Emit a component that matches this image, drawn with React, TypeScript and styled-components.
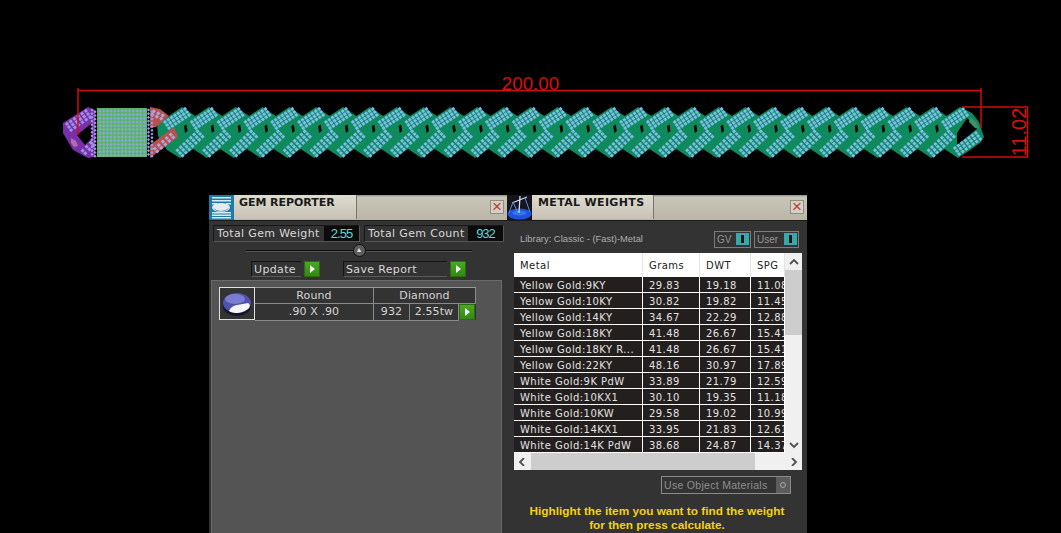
import React from 'react';
import styled, { createGlobalStyle } from 'styled-components';

const GlobalStyle = createGlobalStyle`
  html, body {
    margin: 0;
    padding: 0;
    width: 100%;
    height: 533px;
    overflow: hidden;
    background: #000;
  }
`;

const Page = styled.div`
  width: 1061px;
  height: 533px;
  overflow: hidden;
  background: #000;
`;

const Drawing = styled.svg`
  display: block;
  width: 1061px;
  height: 195px;
`;

const Panels = styled.div`
  display: flex;
  margin-left: 209px;
  height: 338px;
`;

const Panel = styled.section<{ $w: number }>`
  width: ${(p) => p.$w}px;
  flex: none;
  display: flex;
  flex-direction: column;
  background: #333;
  font-family: 'DejaVu Sans', sans-serif;
`;

const TitleBar = styled.header`
  height: 26px;
  flex: none;
  display: flex;
  align-items: flex-start;
  background: linear-gradient(#8a8a80 0, #c9c6b8 2px, #b9b6a8 100%);
  border-bottom: 1px solid #1c1c1c;
  box-sizing: border-box;
`;

const TitleIcon = styled.svg`
  width: 25px;
  height: 25px;
  flex: none;
  display: block;
`;

const TitleTab = styled.div<{ $w: number; $ls: number; $pad: number }>`
  width: ${(p) => p.$w}px;
  height: 24px;
  flex: none;
  box-sizing: border-box;
  padding: 1px 0 0 ${(p) => p.$pad}px;
  background: linear-gradient(#dedbd0, #c6c3b5);
  border-right: 1px solid #77756b;
  font-weight: 700;
  font-size: 11px;
  letter-spacing: ${(p) => p.$ls}px;
  line-height: 13px;
  color: #1a1a1a;
  white-space: nowrap;
`;

const TitleFill = styled.div`
  flex: 1;
`;

const CloseBox = styled.div`
  width: 14px;
  height: 14px;
  margin: 5px 3px 0 0;
  box-sizing: border-box;
  border: 1px solid #8f8d84;
  background: #d4d0c6;
  color: #b84030;
  font: 400 17px/11px 'Liberation Sans', sans-serif;
  text-align: center;
`;

const FieldRow = styled.div`
  display: flex;
  gap: 4px;
  margin: 4px 0 0 4px;
`;

const Field = styled.div<{ $w: number }>`
  width: ${(p) => p.$w}px;
  height: 17px;
  box-sizing: border-box;
  display: flex;
  border: 1px solid #161616;
  border-right-color: #555;
  border-bottom-color: #555;
  background: #333;
`;

const FieldLabel = styled.div`
  flex: 1;
  padding-left: 3px;
  font-size: 11px;
  line-height: 15px;
  letter-spacing: 0.35px;
  color: #d8d8d8;
  white-space: nowrap;
`;

const FieldValue = styled.div<{ $w: number }>`
  width: ${(p) => p.$w}px;
  background: #0b0b0b;
  color: #63d6d6;
  font: 400 13px/15px 'Liberation Sans', sans-serif;
  text-align: center;
  letter-spacing: -1px;
`;

const SliderRow = styled.div`
  display: flex;
  align-items: center;
  margin: 1px 0 0 37px;
  width: 226px;
  height: 15px;
`;

const SliderLine = styled.div`
  flex: 1;
  height: 1px;
  background: #0c0c0c;
  box-shadow: 0 1px 0 #555;
`;

const SliderKnob = styled.div`
  width: 13px;
  height: 13px;
  flex: none;
  box-sizing: border-box;
  border-radius: 50%;
  border: 1px solid #111;
  background: #5e5e5e;
  color: #e6e6e6;
  font: 400 8px/10px 'DejaVu Sans', sans-serif;
  text-align: center;
`;

const ActionRow = styled.div`
  display: flex;
  align-items: center;
  margin: 2px 0 0 42px;
  height: 17px;
`;

const ActionLabel = styled.div<{ $w: number }>`
  width: ${(p) => p.$w}px;
  height: 16px;
  flex: none;
  box-sizing: border-box;
  padding-left: 2px;
  border-left: 1px solid #141414;
  border-top: 1px solid #141414;
  border-bottom: 1px solid #5a5a5a;
  margin-right: 3px;
  font-size: 11px;
  line-height: 15px;
  letter-spacing: 0.35px;
  color: #d8d8d8;
  white-space: nowrap;
`;

const GoButton = styled.div<{ $gap?: number }>`
  width: 16px;
  height: 16px;
  flex: none;
  display: flex;
  align-items: center;
  justify-content: center;
  margin-right: ${(p) => p.$gap ?? 0}px;
  box-sizing: border-box;
  border: 1px solid #2c6b12;
  background: linear-gradient(#4aa822, #2f8a12);
  &::after {
    content: '';
    border-left: 5px solid #f2f2f2;
    border-top: 4px solid transparent;
    border-bottom: 4px solid transparent;
    margin-left: 1px;
  }
`;

const ListBox = styled.div`
  flex: 1;
  margin: 3px 5px 0 2px;
  padding: 6px 0 0 7px;
  background: #545454;
  border: 1px solid #6a6a6a;
  border-bottom: none;
`;

const GemRow = styled.div`
  display: flex;
  width: 257px;
`;

const GemSwatch = styled.div`
  width: 36px;
  height: 33px;
  flex: none;
  box-sizing: border-box;
  border: 1px solid #e0e0e0;
  background: #333;
`;

const GemGrid = styled.div`
  flex: 1;
  display: grid;
  grid-template-columns: 119px 36px 49px 17px;
  grid-template-rows: 16px 17px;
  background: #333;
  border-top: 1px solid #999;
  box-sizing: border-box;
  height: 33px;
`;

const GemCell = styled.div<{ $span?: number }>`
  grid-column: span ${(p) => p.$span ?? 1};
  box-sizing: border-box;
  border-right: 1px solid #8a8a8a;
  border-bottom: 1px solid #8a8a8a;
  font-size: 11px;
  line-height: 15px;
  letter-spacing: 0.1px;
  color: #d4d4d4;
  text-align: center;
  white-space: nowrap;
`;

const LibraryRow = styled.div`
  display: flex;
  align-items: center;
  height: 18px;
  margin: 9px 8px 0 13px;
`;

const LibraryText = styled.div`
  flex: 1;
  font: 400 9.4px/18px 'Liberation Sans', sans-serif;
  color: #aeaeae;
`;

const ToggleBox = styled.div<{ $w: number }>`
  width: ${(p) => p.$w}px;
  height: 17px;
  box-sizing: border-box;
  margin-left: 3px;
  display: flex;
  align-items: center;
  justify-content: space-between;
  padding: 0 1px 0 2px;
  border: 1px solid #7c7c7c;
  font: 400 10px/15px 'Liberation Sans', sans-serif;
  color: #949494;
`;

const ToggleSwitch = styled.div`
  width: 13px;
  height: 12px;
  background: #38a8b0;
  display: flex;
  justify-content: center;
  &::after {
    content: '';
    width: 3px;
    background: #101010;
    margin: 2px 0;
  }
`;

const TableFrame = styled.div`
  width: 288px;
  height: 217px;
  flex: none;
  margin: 5px 0 0 7px;
  background: #f2f2f2;
  display: flex;
  flex-direction: column;
`;

const TableMain = styled.div`
  display: flex;
  height: 200px;
  flex: none;
`;

const TableBody = styled.div`
  width: 271px;
  flex: none;
  overflow: hidden;
  background: #fff;
`;

const Row = styled.div<{ $head?: boolean }>`
  display: flex;
  height: ${(p) => (p.$head ? 24 : 16)}px;
  box-sizing: border-box;
  border-bottom: ${(p) => (p.$head ? 'none' : '1px solid #fff')};
`;

const Cell = styled.div<{ $w: number; $head?: boolean }>`
  width: ${(p) => p.$w}px;
  flex: none;
  box-sizing: border-box;
  padding-left: 6px;
  border-right: 1px solid #fff;
  overflow: hidden;
  white-space: nowrap;
  font-size: 10px;
  letter-spacing: 0.45px;
  background: ${(p) => (p.$head ? '#fff' : '#231f1e')};
  color: ${(p) => (p.$head ? '#222' : '#e2e2e2')};
  line-height: ${(p) => (p.$head ? 25 : 18)}px;
  ${(p) => p.$head && 'border-right-color: #e4e4e4;'}
`;

const VScroll = styled.div`
  width: 17px;
  flex: none;
  display: flex;
  flex-direction: column;
  background: #f0f0f0;
`;

const ScrollArrow = styled.div`
  width: 17px;
  height: 17px;
  flex: none;
  display: flex;
  align-items: center;
  justify-content: center;
`;

const VThumb = styled.div`
  height: 65px;
  flex: none;
  background: #cdcdcd;
`;

const ScrollGap = styled.div`
  flex: 1;
`;

const HScroll = styled.div`
  height: 17px;
  flex: none;
  display: flex;
  background: #f0f0f0;
`;

const HThumb = styled.div`
  width: 224px;
  flex: none;
  background: #cdcdcd;
`;

const ObjectBox = styled.div`
  width: 130px;
  height: 18px;
  flex: none;
  box-sizing: border-box;
  margin: 6px 0 0 154px;
  display: flex;
  align-items: center;
  justify-content: space-between;
  padding-left: 2px;
  border: 1px solid #8a8a8a;
  font: 400 10.5px/16px 'Liberation Sans', sans-serif;
  letter-spacing: 0.3px;
  color: #8e8e8e;
`;

const ObjectKnob = styled.div`
  width: 14px;
  height: 16px;
  background: #5c5c5c;
  display: flex;
  align-items: center;
  justify-content: center;
  &::after {
    content: '';
    width: 6px;
    height: 6px;
    box-sizing: border-box;
    border: 1px solid #a8a8a8;
    border-radius: 50%;
  }
`;

const Hint = styled.div`
  margin: 10px 0 0 0;
  text-align: center;
  font: 700 11.8px/14px 'Liberation Sans', sans-serif;
  color: #f5d20a;
`;

type Pt = [number, number];

// one diamond per stone, all collected in a single path
const stone = (x: number, y: number, r = 2.1) =>
  `M${x - r} ${y}L${x} ${y - r}L${x + r} ${y}L${x} ${y + r}Z`;

const bar = (a: Pt, b: Pt, count: number, rows: number, step = 3.7) => {
  const dx = b[0] - a[0];
  const dy = b[1] - a[1];
  const len = Math.hypot(dx, dy);
  const nx = (-dy / len) * step;
  const ny = (dx / len) * step;
  let d = '';
  for (let i = 0; i < count; i++) {
    for (let r = 0; r < rows; r++) {
      const t = i / (count - 1);
      const o = r - (rows - 1) / 2;
      d += stone(a[0] + dx * t + nx * o, a[1] + dy * t + ny * o);
    }
  }
  return d;
};

const PERIOD = 26.83;
const LINKS = Array.from({ length: 30 }, (_, k) => 182 + PERIOD * k);

const chainOutline = () => {
  const top = LINKS.slice(0, 29)
    .map((p) => `L${p} 107L${p + 13.4} 116`)
    .join('');
  const bottom = [...LINKS]
    .reverse()
    .map((p) => `L${p + 11.4} 149L${p - 2} 158`)
    .join('');
  return `M157 124${top}L960 107L972 113L979 122L984 137L981 142${bottom}L167 150L158 136Z`;
};

const slots = () =>
  LINKS.slice(0, 29)
    .map((p) => `M${p + 2} 126L${p + 4.5} 124.5L${p + 5.5} 131L${p + 3} 133Z`)
    .join('');

const chainStones = () =>
  LINKS.map(
    (p) =>
      bar([p - 15, 125], [p + 5, 112], 7, 3) +
      (p < 950 ? bar([p - 2, 153], [p + 18, 134], 7, 3) : bar([p - 3, 151], [p + 18, 136], 7, 3)),
  ).join('');

const boxStones = () => {
  let d = '';
  for (let y = 111; y < 156; y += 3.7) {
    for (let x = 100; x < 147; x += 3.7) d += stone(x, y, 1.6);
  }
  return d;
};

const sideStones = () => {
  let d = '';
  for (let y = 110; y < 156; y += 3.7) {
    d += stone(92, y, 1.6) + stone(95, y + 1.8, 1.6) + stone(148.5, y, 1.6) + stone(152, y + 1.8, 1.6);
  }
  return d;
};

const ChainDrawing = () => (
  <Drawing viewBox="0 0 1061 195">
    <path d={chainOutline()} fill="#0f8a5c" />
    <path d={slots()} fill="#000" />
    <path d="M967 118L978 128L957 145L957 133Z" fill="#000" />
    <path d="M970 117L976 122L979 129L975 128L969 122Z" fill="#3f8f6a" />
    <path d={chainStones()} fill="#7cbcec" />
    {/* clasp, red half */}
    <path d="M150 107L160 109L169 116L156 127L150 128Z" fill="#b8504e" />
    <path d="M150 158L178 137L174 127L150 145Z" fill="#b8504e" />
    <path d={bar([153, 113], [162, 117], 3, 2) + bar([156, 150], [172, 136], 5, 2)} fill="#a8a8e0" />
    {/* clasp, purple half */}
    <path
      fillRule="evenodd"
      d="M63 123L88 107L95 110L95 157L88 158L73 150L63 133ZM92 123L77 135L85 145L92 138Z"
      fill="#7a2fa8"
    />
    <path d="M71 138L76 141L78 146L74 147L71 143Z" fill="#b070b0" />
    <path d={bar([69, 127], [88, 114], 6, 3) + bar([84, 152], [92, 144], 3, 2)} fill="#9a90e6" />
    {/* clasp box */}
    <rect x="97" y="108" width="50" height="49" fill="#5cb466" />
    <path d={boxStones()} fill="#86a8dc" />
    <path d={sideStones()} fill="#a098e8" />
    {/* dimensions */}
    <g stroke="#d00d0d" strokeWidth="1.5" fill="none">
      <path d="M78 88V135M78 90.5H981M981 88V128" />
      <path d="M962 107H1028M962 157H1028M1027.5 107V157" />
    </g>
    <text x="530.5" y="90" textAnchor="middle" fill="#d80f0f" fontFamily="'Liberation Sans', sans-serif" fontSize="18.8">
      200.00
    </text>
    <text
      transform="translate(1026 132) rotate(-90)"
      textAnchor="middle"
      fill="#d80f0f"
      fontFamily="'Liberation Sans', sans-serif"
      fontSize="20"
    >
      11.02
    </text>
  </Drawing>
);

const ReporterIcon = () => (
  <TitleIcon viewBox="0 0 25 25">
    <rect width="25" height="25" fill="#1f7aa8" />
    <path
      d="M3 2h19v1.5H3zM3 5h19v1.5H3zM3 8h5v1.5H3zM17 8h5v1.5H17zM3 17h19v1.5H3zM3 19.5h19V21H3zM3 22h19v1.5H3z"
      fill="#d6eef8"
    />
    <ellipse cx="12" cy="12.5" rx="9" ry="4.5" fill="#e4ecf0" />
    <path d="M4 13q8 6 16 0q-3 3.5-8 3.5T4 13Z" fill="#4f86ae" />
  </TitleIcon>
);

const ScalesIcon = () => (
  <TitleIcon viewBox="0 0 25 25">
    <rect width="25" height="25" fill="#15151a" />
    <ellipse cx="12.5" cy="19" rx="12" ry="5.5" fill="#1c55dc" />
    <ellipse cx="12.5" cy="18" rx="7" ry="2.6" fill="#3474ec" />
    <path d="M13 1L12 18M5 8L20 2" stroke="#cfdcf5" strokeWidth="1.3" />
    <path d="M6 7L2 18M6 7L11 18M18 3L23 17" stroke="#5a8af0" strokeWidth="1" />
  </TitleIcon>
);

const GemDrawing = () => (
  <svg width="34" height="31" viewBox="0 0 34 31" style={{ display: 'block' }}>
    <ellipse cx="17" cy="18" rx="14" ry="10" fill="#16162a" />
    <ellipse cx="17" cy="15" rx="14" ry="10" fill="#4f52ac" />
    <ellipse cx="15" cy="11" rx="10" ry="5" fill="#7a7cd0" />
    <path d="M9 23q2-5 8-6t11-2q3 2 1 5q-4 4-11 5q-6 0-9-2Z" fill="#f6f6f6" />
  </svg>
);

const Chevron = ({ dir }: { dir: 'up' | 'down' | 'left' | 'right' }) => {
  const d = {
    up: 'M1 6L5 2L9 6',
    down: 'M1 2L5 6L9 2',
    left: 'M6 0L2 4L6 8',
    right: 'M3 0L7 4L3 8',
  }[dir];
  return (
    <svg width="10" height="8" viewBox="0 0 10 8">
      <path d={d} fill="none" stroke="#505050" strokeWidth="1.8" />
    </svg>
  );
};

const COLS = [129, 57, 51, 34];

const METALS: string[][] = [
  ['Yellow Gold:9KY', '29.83', '19.18', '11.08'],
  ['Yellow Gold:10KY', '30.82', '19.82', '11.45'],
  ['Yellow Gold:14KY', '34.67', '22.29', '12.88'],
  ['Yellow Gold:18KY', '41.48', '26.67', '15.41'],
  ['Yellow Gold:18KY R...', '41.48', '26.67', '15.41'],
  ['Yellow Gold:22KY', '48.16', '30.97', '17.89'],
  ['White Gold:9K PdW', '33.89', '21.79', '12.59'],
  ['White Gold:10KX1', '30.10', '19.35', '11.18'],
  ['White Gold:10KW', '29.58', '19.02', '10.99'],
  ['White Gold:14KX1', '33.95', '21.83', '12.61'],
  ['White Gold:14K PdW', '38.68', '24.87', '14.37'],
];

export default function App(): JSX.Element {
  return (
    <Page>
      <GlobalStyle />
      <ChainDrawing />
      <Panels>
        <Panel $w={298}>
          <TitleBar>
            <ReporterIcon />
            <TitleTab $w={123} $ls={-0.05} $pad={5}>GEM REPORTER</TitleTab>
            <TitleFill />
            <CloseBox>×</CloseBox>
          </TitleBar>
          <FieldRow>
            <Field $w={147}>
              <FieldLabel>Total Gem Weight</FieldLabel>
              <FieldValue $w={35}>2.55</FieldValue>
            </Field>
            <Field $w={140}>
              <FieldLabel>Total Gem Count</FieldLabel>
              <FieldValue $w={35}>932</FieldValue>
            </Field>
          </FieldRow>
          <SliderRow>
            <SliderLine />
            <SliderKnob>▴</SliderKnob>
            <SliderLine />
          </SliderRow>
          <ActionRow>
            <ActionLabel $w={50}>Update</ActionLabel>
            <GoButton $gap={23} />
            <ActionLabel $w={104}>Save Report</ActionLabel>
            <GoButton />
          </ActionRow>
          <ListBox>
            <GemRow>
              <GemSwatch>
                <GemDrawing />
              </GemSwatch>
              <GemGrid>
                <GemCell>Round</GemCell>
                <GemCell $span={3}>Diamond</GemCell>
                <GemCell>.90 X .90</GemCell>
                <GemCell>932</GemCell>
                <GemCell>2.55tw</GemCell>
                <GoButton />
              </GemGrid>
            </GemRow>
          </ListBox>
        </Panel>
        <Panel $w={300}>
          <TitleBar>
            <ScalesIcon />
            <TitleTab $w={122} $ls={0.35} $pad={6}>METAL WEIGHTS</TitleTab>
            <TitleFill />
            <CloseBox>×</CloseBox>
          </TitleBar>
          <LibraryRow>
            <LibraryText>Library: Classic - (Fast)-Metal</LibraryText>
            <ToggleBox $w={37}>
              GV
              <ToggleSwitch />
            </ToggleBox>
            <ToggleBox $w={45}>
              User
              <ToggleSwitch />
            </ToggleBox>
          </LibraryRow>
          <TableFrame>
            <TableMain>
              <TableBody>
                <Row $head>
                  {['Metal', 'Grams', 'DWT', 'SPG'].map((h, i) => (
                    <Cell key={h} $w={COLS[i]} $head>
                      {h}
                    </Cell>
                  ))}
                </Row>
                {METALS.map((m) => (
                  <Row key={m[0]}>
                    {m.map((v, i) => (
                      <Cell key={i} $w={COLS[i]}>
                        {v}
                      </Cell>
                    ))}
                  </Row>
                ))}
              </TableBody>
              <VScroll>
                <ScrollArrow>
                  <Chevron dir="up" />
                </ScrollArrow>
                <VThumb />
                <ScrollGap />
                <ScrollArrow>
                  <Chevron dir="down" />
                </ScrollArrow>
              </VScroll>
            </TableMain>
            <HScroll>
              <ScrollArrow>
                <Chevron dir="left" />
              </ScrollArrow>
              <HThumb />
              <ScrollGap />
              <ScrollArrow>
                <Chevron dir="right" />
              </ScrollArrow>
            </HScroll>
          </TableFrame>
          <ObjectBox>
            Use Object Materials
            <ObjectKnob />
          </ObjectBox>
          <Hint>
            Highlight the item you want to find the weight
            <br />
            for then press calculate.
          </Hint>
        </Panel>
      </Panels>
    </Page>
  );
}
